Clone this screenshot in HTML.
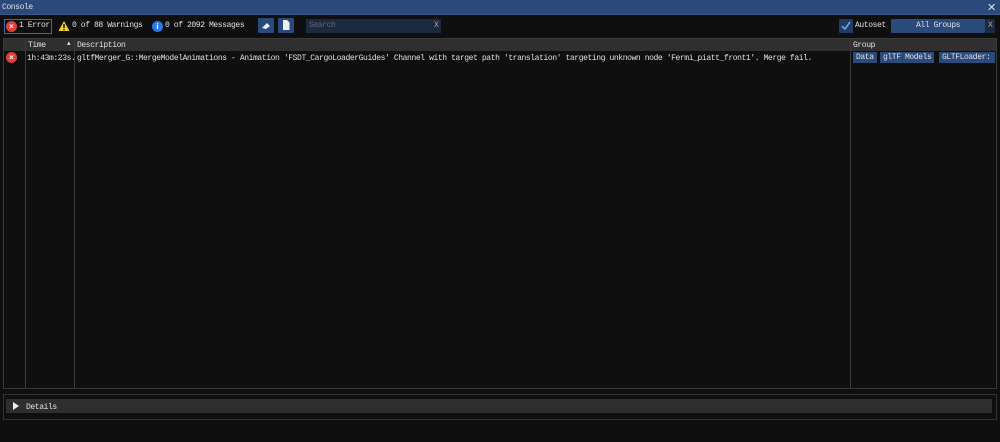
<!DOCTYPE html>
<html><head><style>
*{margin:0;padding:0;box-sizing:border-box}
body{width:1000px;height:442px;background:#0f0f0f;font-family:"Liberation Mono",monospace;font-size:8px;letter-spacing:-0.4px;color:#e0e0e0;position:relative;overflow:hidden}
.a{position:absolute;white-space:nowrap}
.title{left:0;top:0;width:1000px;height:15px;background:#294a7a;border-bottom:1px solid #3a5a8a}
.btn{background:#294a7a;border-radius:1px}
.ic{width:11px;height:11px;border-radius:50%;background:#e0403a;color:#fff;font-size:8px;line-height:11px;text-align:center;font-family:"Liberation Sans",sans-serif;font-weight:bold;letter-spacing:0}
.tag{background:#294a7a;height:11px;line-height:11px;padding:0 3px}
</style></head><body>
<div class="a title"></div>
<div class="a" style="left:2px;top:3px">Console</div>
<div class="a" style="left:987px;top:1px;font-size:11px;font-family:'Liberation Sans',sans-serif">✕</div>

<div class="a" style="left:4px;top:19px;width:48px;height:15px;border:1px solid #3a6ab0"></div>
<div class="a ic" style="left:6px;top:21px">×</div>
<div class="a" style="left:19px;top:21px">1 Error</div>
<svg class="a" style="left:58px;top:20px" width="12" height="12"><polygon points="6,1 11.5,11 0.5,11" fill="#f0d020"/><rect x="5.3" y="4" width="1.4" height="4" fill="#000"/><rect x="5.3" y="9" width="1.4" height="1.2" fill="#000"/></svg>
<div class="a" style="left:72px;top:21px">0 of 88 Warnings</div>
<div class="a ic" style="left:152px;top:21px;background:#2a7ae0">i</div>
<div class="a" style="left:165px;top:21px">0 of 2092 Messages</div>
<div class="a btn" style="left:258px;top:18px;width:16px;height:15px"></div>
<svg class="a" style="left:260px;top:20px" width="12" height="11"><path d="M2 8 L7 3 L10 6 L6 9 Z" fill="#eee"/></svg>
<div class="a btn" style="left:278px;top:18px;width:16px;height:15px"></div>
<svg class="a" style="left:281px;top:19px" width="10" height="12"><path d="M2 1 H6 L8.5 3.5 V11 H2 Z" fill="#eee"/></svg>
<div class="a" style="left:306px;top:19px;width:135px;height:14px;background:#1c2a40"></div>
<div class="a" style="left:309px;top:21px;color:#667">Search</div>
<div class="a" style="left:434px;top:21px;color:#aaa">X</div>

<div class="a btn" style="left:839px;top:19px;width:14px;height:14px;background:#213c5e"></div>
<svg class="a" style="left:840px;top:20px" width="12" height="12"><path d="M2 6 L5 9 L10 2" stroke="#5aa0f0" stroke-width="1.8" fill="none"/></svg>
<div class="a" style="left:855px;top:21px">Autoset</div>
<div class="a btn" style="left:891px;top:19px;width:94px;height:14px"></div>
<div class="a" style="left:916px;top:21px">All Groups</div>
<div class="a" style="left:985px;top:19px;width:10px;height:14px;background:#1c2a40"></div>
<div class="a" style="left:988px;top:21px;color:#aaa">X</div>

<div class="a" style="left:3px;top:38px;width:994px;height:351px;border:1px solid #3a3a3a"></div>
<div class="a" style="left:4px;top:39px;width:992px;height:12px;background:#2f2f2f"></div>
<div class="a" style="left:25px;top:39px;width:1px;height:349px;background:#3a3a3a"></div>
<div class="a" style="left:74px;top:39px;width:1px;height:349px;background:#3a3a3a"></div>
<div class="a" style="left:850px;top:39px;width:1px;height:349px;background:#3a3a3a"></div>
<div class="a" style="left:28px;top:41px">Time</div>
<div class="a" style="left:67px;top:40px;font-size:6px">▲</div>
<div class="a" style="left:77px;top:41px">Description</div>
<div class="a" style="left:853px;top:41px">Group</div>
<div class="a ic" style="left:6px;top:52px">×</div>
<div class="a" style="left:27px;top:54px">1h:43m:23s.</div>
<div class="a" style="left:77px;top:54px">gltfMerger_G::MergeModelAnimations - Animation 'FSDT_CargoLoaderGuides' Channel with target path 'translation' targeting unknown node 'Fermi_piatt_front1'. Merge fail.</div>
<div class="a tag" style="left:853px;top:52px">Data</div>
<div class="a tag" style="left:880px;top:52px">glTF Models</div>
<div class="a tag" style="left:939px;top:52px;width:56px;overflow:hidden">GLTFLoader:</div>

<div class="a" style="left:3px;top:394px;width:994px;height:26px;border:1px solid #333"></div>
<div class="a" style="left:6px;top:399px;width:986px;height:14px;background:#2e2e2e"></div>
<svg class="a" style="left:12px;top:402px" width="8" height="8"><polygon points="1,0 7,4 1,8" fill="#eee"/></svg>
<div class="a" style="left:26px;top:403px">Details</div>
</body></html>
